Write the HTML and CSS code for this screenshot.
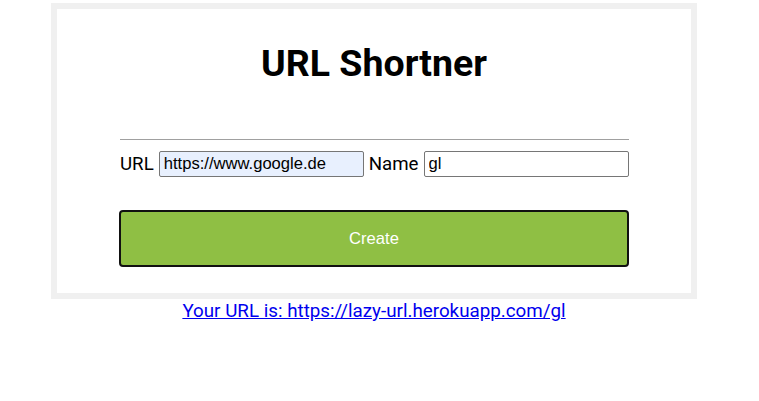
FILE: index.html
```html
<!DOCTYPE html>
<html>
<head>
<meta charset="utf-8">
<link rel="stylesheet" href="styles.css">
</head>
<body>
<div class="card">
  <h1 class="title">URL Shortner</h1>
  <hr class="rule">
  <form class="form">
    <div class="row">
      <label class="label">URL</label>
      <input class="field field-url" type="text" value="https://www.google.de">
      <label class="label">Name</label>
      <input class="field field-name" type="text" value="gl">
    </div>
    <button class="create" type="button">Create</button>
  </form>
</div>
<div class="result"><a class="link" href="#">Your URL is: https://lazy-url.herokuapp.com/gl</a></div>
</body>
</html>
```
FILE: styles.css
```css
html, body { margin: 0; padding: 0; background: #fff; }
body { font-family: Roboto, "Liberation Sans", sans-serif; color: #000; }
.card {
  box-sizing: border-box;
  width: 646px;
  margin: 3px 0 0 51px;
  border: 6px solid #f0f0f0;
  padding: 0 62px 26px 62px;
  background: #fff;
}
.title {
  margin: 0;
  padding-top: 33px;
  font-size: 37.5px;
  font-weight: 700;
  line-height: 43px;
  text-align: center;
}
.rule {
  margin: 54px 0 0 1px;
  border: 0;
  border-top: 1px solid #a0a0a0;
  height: 0;
}
.form { display: flex; flex-direction: column; }
.row {
  display: flex;
  align-items: center;
  margin-top: 11px;
  margin-left: 1px;
  gap: 5px;
}
.label { font-size: 18.7px; line-height: 26px; flex: none; }
.field {
  box-sizing: border-box;
  height: 26px;
  min-width: 0;
  border: 1px solid #767676;
  border-radius: 2px;
  padding: 0 4px;
  font-family: "Liberation Sans", Arial, sans-serif;
  font-size: 16.6px;
  color: #000;
  background: #fff;
  outline: none;
  flex: 0 1 205px;
}
.field-url { background: #e8f0fe; }
.create {
  box-sizing: border-box;
  margin-top: 33px;
  width: 510px;
  height: 57px;
  background: #8fbf44;
  border: 2px solid #111;
  border-radius: 4px;
  color: #fff;
  font-family: "Liberation Sans", Arial, sans-serif;
  font-size: 16.6px;
}
.result {
  width: 646px;
  margin-left: 51px;
  text-align: center;
  padding-top: 1px;
}
.link { color: #0000ee; font-size: 18.8px; text-decoration: underline; }
```
